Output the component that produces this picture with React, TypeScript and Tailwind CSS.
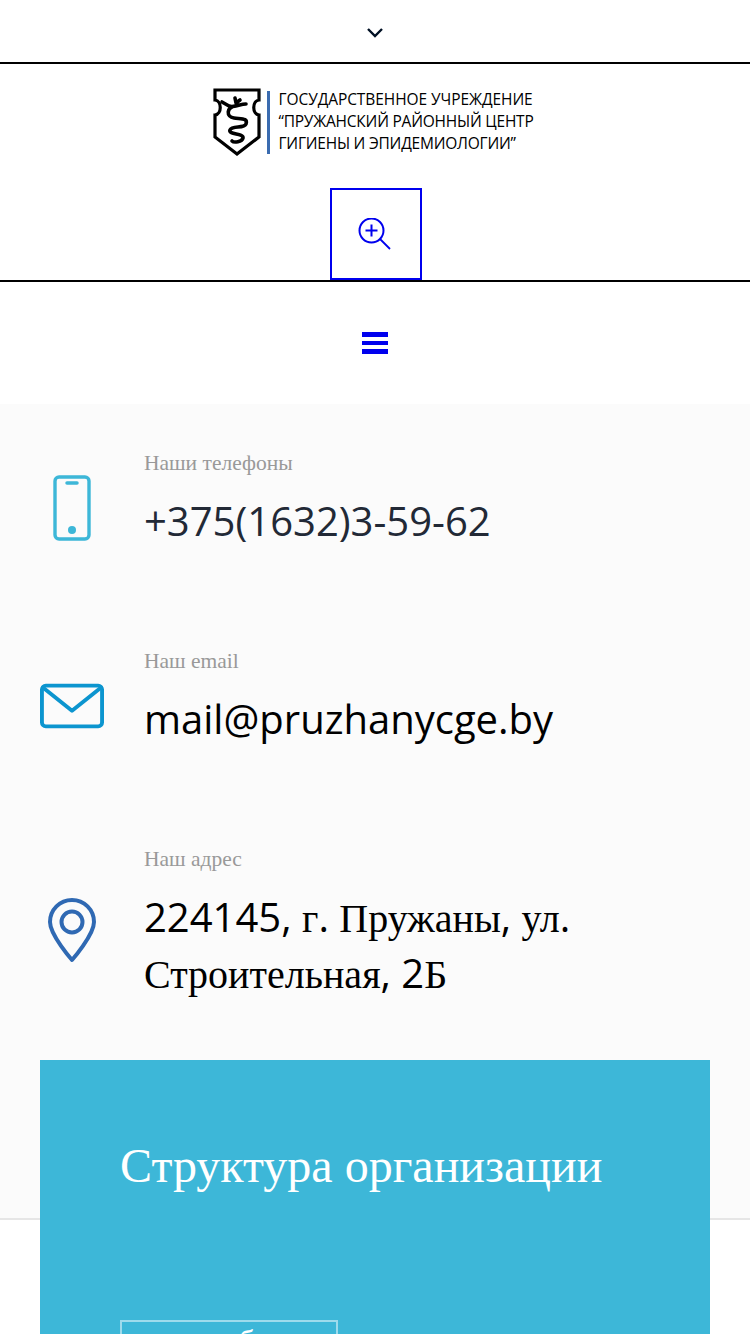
import React from "react";

const sans = "font-['Open_Sans',sans-serif]";
const serif = "font-['Liberation_Serif',serif]";

function Logo() {
  return (
    <svg width="50" height="70" viewBox="0 0 50 70" className="block">
      <path d="M3 3 H47 V13 C40 14 40 27 47 28 V50 L25 67 L3 50 V28 C10 27 10 14 3 13 Z" fill="#fff" stroke="#000" strokeWidth="3.2" />
      <path d="M10 15 L17 19 C22 21 28 17 34 17 M24 19 C14 20 14 30 22 31 C30 32 36 31 34 37 C32 42 20 38 18 43 C16 48 32 46 31 51 C30 55 22 56 20 54 M23 11 L24 16 L28 13" fill="none" stroke="#000" strokeWidth="3.6" strokeLinecap="round" strokeLinejoin="round" />
    </svg>
  );
}

function Row({ label, icon, children, cls, gap }: { label: string; icon: React.ReactNode; children: React.ReactNode; cls: string; gap: string }) {
  return (
    <div className={`flex items-start pl-10 shrink-0 ${gap}`}>
      <div className="w-16 flex justify-center shrink-0">{icon}</div>
      <div className="ml-10">
        <div className={`${serif} text-[21.5px] leading-[30px] text-[#999]`}>{label}</div>
        <div className={`${cls} text-[40px] leading-[56px] mt-[15px] pr-[110px]`}>{children}</div>
      </div>
    </div>
  );
}

const Ru = ({ children }: { children: React.ReactNode }) => (
  <span className={`${serif} leading-none`}>{children}</span>
);

export default function App() {
  return (
    <div className="w-[750px] h-[1334px] overflow-hidden bg-white">
      <div className="h-[64px] border-b-2 border-black flex justify-center pt-[27px]">
        <svg width="18" height="12" viewBox="0 0 18 12" fill="none" stroke="#001024" strokeWidth="2.4">
          <path d="M2 2 L9 9 L16 2" />
        </svg>
      </div>
      <div className="h-[218px] border-b-2 border-black flex flex-col items-center">
        <div className="flex mt-[23px] h-[70px] items-center mr-[4px]">
          <div className="w-[50px] mr-[5px]"><Logo /></div>
          <div className="w-[3px] h-[63px] bg-[#3b6cb0] mr-[8px]" />
          <div className={`${sans} text-[15.5px] leading-[22px] text-black tracking-[-0.22px] whitespace-nowrap mt-[-3px]`}>
            <div className="tracking-[-0.07px]">ГОСУДАРСТВЕННОЕ УЧРЕЖДЕНИЕ</div>
            <div>“ПРУЖАНСКИЙ РАЙОННЫЙ ЦЕНТР</div>
            <div>ГИГИЕНЫ И ЭПИДЕМИОЛОГИИ”</div>
          </div>
        </div>
        <div className="mt-[31px] ml-[2px] w-[92px] h-[92px] border-2 border-[#0000ee] flex items-center justify-center">
          <svg width="34" height="34" viewBox="0 0 34 34" fill="none" stroke="#0000ee" className="ml-[-3px] mt-[1px]">
            <circle cx="13.5" cy="12.5" r="12" strokeWidth="2" />
            <path d="M13.5 6.5 V18.5 M7.5 12.5 H19.5" strokeWidth="2" />
            <path d="M22 21 L32 31" strokeWidth="1.8" />
          </svg>
        </div>
      </div>
      <div className="h-[122px] flex items-center justify-center">
        <div className="w-[26px] flex flex-col gap-[4px]">
          <div className="h-[4.5px] bg-[#0000ee]" />
          <div className="h-[4.5px] bg-[#0000ee]" />
          <div className="h-[4.5px] bg-[#0000ee]" />
        </div>
      </div>
      <div className="h-[816px] bg-[#fbfbfb] border-b-2 border-[#e6e6e6] flex flex-col pt-[44px]">
        <Row
          label="Наши телефоны"
          gap="mb-[97px]"
          cls={`${sans} text-[#222936]`}
          icon={
            <svg width="38" height="66" viewBox="0 0 38 66" fill="none" stroke="#3db7d8" className="mt-[27px]">
              <rect x="2" y="2" width="34" height="62" rx="4" strokeWidth="3.4" />
              <path d="M14 8 H24" strokeWidth="3.5" strokeLinecap="round" />
              <circle cx="19" cy="55" r="4" fill="#3db7d8" stroke="none" />
            </svg>
          }
        >
          +375(1632)3-59-62
        </Row>
        <Row
          label="Наш email"
          gap="mb-[97px]"
          cls={`${sans} text-black`}
          icon={
            <svg width="66" height="46" viewBox="0 0 66 46" fill="none" stroke="#0c95cf" strokeWidth="4" strokeLinejoin="round" className="mt-[37px]">
              <rect x="2" y="2" width="62" height="42" rx="4" />
              <path d="M3 4 L33 28 L63 4" strokeLinecap="round" />
            </svg>
          }
        >
          mail@pruzhanycge.by
        </Row>
        <Row
          label="Наш адрес"
          gap="mb-[59px]"
          cls={`${sans} text-black`}
          icon={
            <svg width="50" height="66" viewBox="0 0 50 66" fill="none" stroke="#2f69b3" strokeWidth="4" className="mt-[53px]">
              <path d="M25 63 C25 63 3 38 3 25 A22 22 0 0 1 47 25 C47 38 25 63 25 63 Z" strokeLinejoin="round" />
              <circle cx="25" cy="25" r="10.5" />
            </svg>
          }
        >
          224145, <Ru>г</Ru>. <Ru>Пружаны</Ru>, <Ru>ул</Ru>. <Ru>Строительная</Ru>, 2<Ru>Б</Ru>
        </Row>
        <div className="mx-10 h-[600px] bg-[#3db7d8] shrink-0 pt-[79px] px-20">
          <div className={`${serif} text-[48px] leading-[54px] text-white whitespace-nowrap`}>Структура организации</div>
          <div className={`${serif} mt-[127px] w-[218px] h-[60px] border-2 border-white/50 text-white text-[32px] leading-[38px] text-center`}>подробнее</div>
        </div>
      </div>
    </div>
  );
}
